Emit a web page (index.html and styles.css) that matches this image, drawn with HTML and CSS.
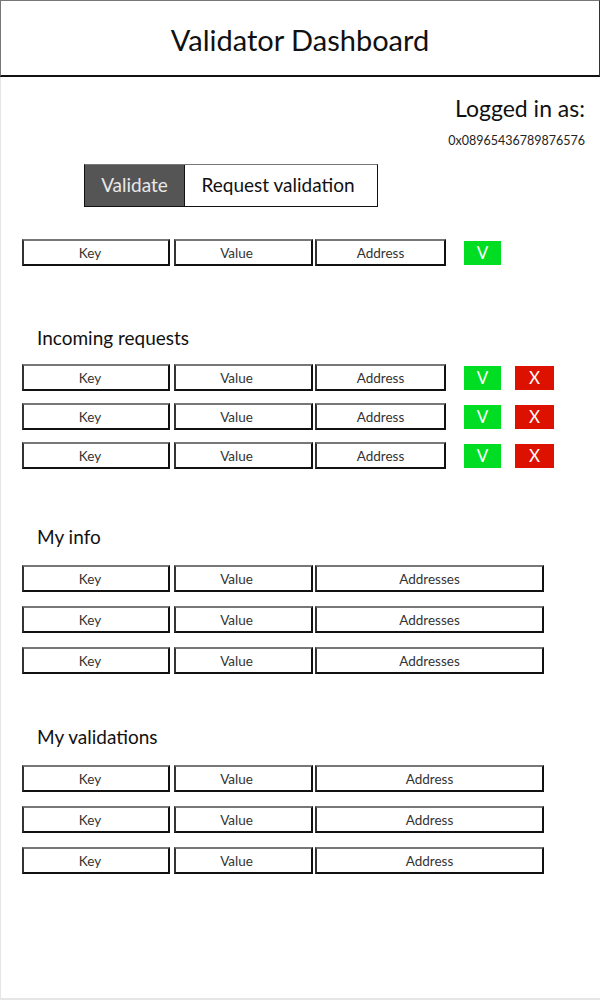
FILE: index.html
```html
<!DOCTYPE html>
<html lang="en">
<head>
    <meta charset="UTF-8">
    <title>Validator Dashboard</title>
    <link rel="stylesheet" href="styles.css">
</head>
<body>
    <div class="page">
        <div class="header">Validator Dashboard</div>

        <div class="login">
            <div class="login-label">Logged in as:</div>
            <div class="login-address">0x08965436789876576</div>
        </div>

        <div class="tabs">
            <div class="tab tab-active">Validate</div>
            <div class="tab">Request validation</div>
        </div>

        <!-- formulir validasi -->
        <div class="row row-first">
            <div class="cell cell-key">Key</div>
            <div class="cell cell-value">Value</div>
            <div class="cell cell-address">Address</div>
            <div class="btn btn-ok">V</div>
        </div>

        <h2 class="section-title title-incoming">Incoming requests</h2>
        <div class="row">
            <div class="cell cell-key">Key</div>
            <div class="cell cell-value">Value</div>
            <div class="cell cell-address">Address</div>
            <div class="btn btn-ok">V</div>
            <div class="btn btn-no">X</div>
        </div>
        <div class="row">
            <div class="cell cell-key">Key</div>
            <div class="cell cell-value">Value</div>
            <div class="cell cell-address">Address</div>
            <div class="btn btn-ok">V</div>
            <div class="btn btn-no">X</div>
        </div>
        <div class="row">
            <div class="cell cell-key">Key</div>
            <div class="cell cell-value">Value</div>
            <div class="cell cell-address">Address</div>
            <div class="btn btn-ok">V</div>
            <div class="btn btn-no">X</div>
        </div>

        <h2 class="section-title title-info">My info</h2>
        <div class="row row-wide">
            <div class="cell cell-key">Key</div>
            <div class="cell cell-value">Value</div>
            <div class="cell cell-long">Addresses</div>
        </div>
        <div class="row row-wide">
            <div class="cell cell-key">Key</div>
            <div class="cell cell-value">Value</div>
            <div class="cell cell-long">Addresses</div>
        </div>
        <div class="row row-wide">
            <div class="cell cell-key">Key</div>
            <div class="cell cell-value">Value</div>
            <div class="cell cell-long">Addresses</div>
        </div>

        <h2 class="section-title title-valid">My validations</h2>
        <div class="row row-wide">
            <div class="cell cell-key">Key</div>
            <div class="cell cell-value">Value</div>
            <div class="cell cell-long">Address</div>
        </div>
        <div class="row row-wide">
            <div class="cell cell-key">Key</div>
            <div class="cell cell-value">Value</div>
            <div class="cell cell-long">Address</div>
        </div>
        <div class="row row-wide">
            <div class="cell cell-key">Key</div>
            <div class="cell cell-value">Value</div>
            <div class="cell cell-long">Address</div>
        </div>
    </div>
</body>
</html>
```

FILE: styles.css
```css
body {
    margin: 0;
    font-family: 'Lato', 'Liberation Sans', sans-serif;
    color: #111;
    background: #fff;
}

.page {
    width: 600px;
    height: 1000px;
    box-sizing: border-box;
    border-left: 1px solid #e6e6e6;
    border-bottom: 2px solid #e6e6e6;
}

.header {
    height: 77px;
    box-sizing: border-box;
    border: 1px solid #777;
    border-bottom: 2px solid #111;
    border-right-color: #333;
    margin-left: -1px;
    display: flex;
    align-items: center;
    justify-content: center;
    font-size: 29px;
    padding-top: 2px;
}

.login {
    text-align: right;
    padding-right: 15px;
    margin-top: 16px;
}

.login-label {
    font-size: 23px;
    line-height: 30px;
}

.login-address {
    font-size: 12.5px;
    margin-top: 10px;
    color: #222;
}

.tabs {
    display: flex;
    width: 294px;
    height: 43px;
    box-sizing: border-box;
    margin: 16px 0 0 83px;
    border: 1px solid #111;
    border-top-color: #777;
}

.tab {
    display: flex;
    align-items: center;
    justify-content: center;
    font-size: 19px;
    padding-bottom: 2px;
    padding-right: 6px;
    flex: 1;
}

.tab-active {
    flex: 0 0 99px;
    padding-right: 0;
    background: #555;
    color: #e8e8e8;
    border-right: 1px solid #111;
}

.row {
    display: flex;
    align-items: center;
    margin-left: 21px;
    height: 27px;
    margin-top: 12px;
}

.row-first {
    margin-top: 32px;
}

.row-wide {
    margin-top: 14px;
}

.cell {
    height: 27px;
    box-sizing: border-box;
    border: 2px solid #111;
    border-top-color: #777;
    border-left-color: #333;
    display: flex;
    align-items: center;
    justify-content: center;
    font-size: 13.5px;
    color: #333;
    padding-top: 1px;
}

.cell-key {
    width: 148px;
    margin-right: 4px;
    padding-right: 12px;
}

.cell-value {
    width: 139px;
    margin-right: 2px;
    padding-right: 14px;
}

.cell-address {
    width: 131px;
    margin-right: 18px;
}

.cell-long {
    width: 229px;
}

.btn {
    width: 37px;
    height: 24px;
    display: flex;
    align-items: center;
    justify-content: center;
    color: #fff;
    font-size: 17px;
}

.btn-ok {
    background: #00dd22;
}

.btn-no {
    background: #dd1100;
    width: 39px;
    margin-left: 14px;
}

.section-title {
    font-size: 19px;
    font-weight: normal;
    margin: 0 0 0 36px;
    line-height: 24px;
}

.title-incoming {
    margin-top: 60px;
    margin-bottom: 14px;
}

.title-info {
    margin-top: 56px;
    margin-bottom: 16px;
}

.title-valid {
    margin-top: 51px;
    margin-bottom: 16px;
}
```
